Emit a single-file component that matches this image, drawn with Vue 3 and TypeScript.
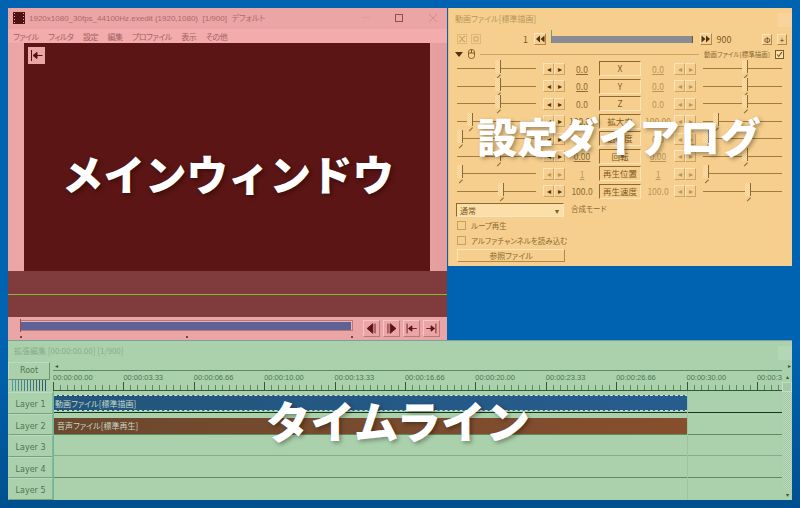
<script setup lang="ts">
interface ParamRow {
  label: string;
  left: string;
  right: string;
  leftPos: number;
  rightPos: number;
  leftLine?: boolean;
  rightLine?: boolean;
  leftOff?: boolean;
  rightOff?: boolean;
}

const menus = ["ファイル", "フィルタ", "設定", "編集", "プロファイル", "表示", "その他"];

const transport = [
  "M10 3L3.5 8.5L10 14Z M12.5 3V14",
  "M4.5 3V14 M7 3L13.5 8.5L7 14Z",
  "M3.5 3V14 M5 8.5L9 5.5V11.5Z M9 8.5H14.5",
  "M13.5 3V14 M12 8.5L8 5.5V11.5Z M8 8.5H2.5",
];

const params: ParamRow[] = [
  { label: "X", left: "0.0", right: "0.0", leftPos: 38, rightPos: 39, leftLine: true, rightLine: true, rightOff: true },
  { label: "Y", left: "0.0", right: "0.0", leftPos: 38, rightPos: 39, leftLine: true, rightLine: true, rightOff: true },
  { label: "Z", left: "0.0", right: "0.0", leftPos: 38, rightPos: 39, rightOff: true },
  { label: "拡大率", left: "100.00", right: "100.00", leftPos: 10, rightPos: 10, rightOff: true },
  { label: "透明度", left: "0.0", right: "0.0", leftPos: 0, rightPos: 0, rightOff: true },
  { label: "回転", left: "0.00", right: "0.00", leftPos: 38, rightPos: 39, leftLine: true, rightLine: true, rightOff: true },
  { label: "再生位置", left: "1", right: "1", leftPos: 0, rightPos: 0, leftLine: true, rightLine: true, leftOff: true, rightOff: true },
  { label: "再生速度", left: "100.0", right: "100.0", leftPos: 41, rightPos: 42, rightOff: true },
];

const rulerLabels = [
  "00:00:00.00", "00:00:03.33", "00:00:06.66", "00:00:10.00", "00:00:13.33", "00:00:16.66",
  "00:00:20.00", "00:00:23.33", "00:00:26.66", "00:00:30.00", "00:00:33.33",
];

const layers = ["Layer 1", "Layer 2", "Layer 3", "Layer 4", "Layer 5"];
</script>

<template>
  <div class="desktop">
    <section class="window main-window">
      <header class="main-title">
        <svg class="film" width="12" height="12" viewBox="0 0 12 12">
          <rect width="12" height="12" fill="#4e1212" />
          <path d="M1 1h1v1H1zM1 4h1v1H1zM1 7h1v1H1zM1 10h1v1H1zM10 1h1v1h-1zM10 4h1v1h-1zM10 7h1v1h-1zM10 10h1v1h-1z" fill="#eca5a5" />
        </svg>
        <span class="main-caption">1920x1080_30fps_44100Hz.exedit (1920,1080)&nbsp; [1/900]&nbsp; デフォルト</span>
        <div class="caption-buttons">
          <i class="cap-min"></i>
          <i class="cap-max"></i>
          <svg width="10" height="10" viewBox="0 0 10 10"><path d="M1 1L9 9M9 1L1 9" stroke="#cf8e8e" fill="none" /></svg>
        </div>
      </header>
      <nav class="menu">
        <span v-for="m in menus" :key="m">{{ m }}</span>
      </nav>
      <div class="stage">
        <div class="screen">
          <button class="back-btn">
            <svg width="17" height="17" viewBox="0 0 17 17">
              <path d="M3.5 3V14 M5 8.5L9 5.5V11.5Z M9 8.5H14.5" fill="#4e1212" stroke="#4e1212" />
            </svg>
          </button>
        </div>
      </div>
      <div class="wave"><i></i></div>
      <div class="seek">
        <div class="seek-track">
          <div class="seek-bar"><i class="seek-handle"></i><i class="seek-fill"></i></div>
          <div class="seek-marks"><i></i><i></i><i></i></div>
        </div>
        <div class="transport">
          <button v-for="d in transport" :key="d">
            <svg width="15" height="15" viewBox="0 0 17 17">
              <path :d="d" fill="#5a1514" stroke="#5a1514" />
            </svg>
          </button>
        </div>
      </div>
    </section>

    <section class="window settings-window">
      <header class="settings-title">
        <span>動画ファイル[標準描画]</span>
        <i class="ghost-btn"></i>
      </header>
      <div class="settings-tools">
        <button class="flat-btn">
          <svg width="8" height="8" viewBox="0 0 8 8"><path d="M1 1L4 3.5L7 1M1 7L4 4.5L7 7M4 3.5V4.5" fill="none" stroke="#b89558" /></svg>
        </button>
        <button class="flat-btn">
          <svg width="8" height="8" viewBox="0 0 8 8"><rect x="2" y="2" width="4" height="4" fill="none" stroke="#c9a666" /></svg>
        </button>
        <span class="frame-start">1</span>
        <button class="jump-btn">
          <svg width="10" height="10" viewBox="0 0 10 10"><path d="M5 1.5V8.5L1 5ZM9.5 1.5V8.5L5.5 5Z" fill="#4e3510" /></svg>
        </button>
        <div class="frame-bar"></div>
        <button class="jump-btn">
          <svg width="10" height="10" viewBox="0 0 10 10"><path d="M.5 1.5V8.5L4.5 5ZM5 1.5V8.5L9 5Z" fill="#4e3510" /></svg>
        </button>
        <span class="frame-end">900</span>
        <button class="mini-btn first">Φ</button>
        <button class="mini-btn">+</button>
      </div>
      <div class="settings-head">
        <span class="fold"></span>
        <svg width="7" height="10" viewBox="0 0 7 10">
          <path d="M3.5 .5C1.5 .5 .5 1.5 .5 3.5V6.5C.5 8.5 1.5 9.5 3.5 9.5S6.5 8.5 6.5 6.5V3.5C6.5 1.5 5.5 .5 3.5 .5ZM.5 4H6.5M3.5 .5V4" fill="none" stroke="#7c5a22" />
        </svg>
        <i class="head-rule"></i>
        <span class="head-label">動画ファイル[標準描画]</span>
        <span class="check checked">
          <svg width="9" height="9" viewBox="0 0 9 9"><path d="M1.5 4.5L3.5 7L7.5 1.5" fill="none" stroke="#6e4f1c" stroke-width="1.3" /></svg>
        </span>
      </div>
      <div class="params">
        <div v-for="p in params" :key="p.label" class="param">
          <div class="slider" :class="{ dim: p.leftOff }"><i :style="{ left: p.leftPos + 'px' }"></i></div>
          <div class="arrows" :class="{ dim: p.leftOff }"><b>◂</b><b>▸</b></div>
          <span class="value" :class="{ line: p.leftLine, dim: p.leftOff }">{{ p.left }}</span>
          <button class="param-btn">{{ p.label }}</button>
          <span class="value" :class="{ line: p.rightLine, dim: p.rightOff }">{{ p.right }}</span>
          <div class="arrows" :class="{ dim: p.rightOff }"><b>◂</b><b>▸</b></div>
          <div class="slider"><i :style="{ left: p.rightPos + 'px' }"></i></div>
        </div>
      </div>
      <div class="blend">
        <div class="select"><span>通常</span><b>▾</b></div>
        <span>合成モード</span>
      </div>
      <label class="option"><i class="check"></i>ループ再生</label>
      <label class="option"><i class="check"></i>アルファチャンネルを読み込む</label>
      <button class="ref-btn">参照ファイル</button>
    </section>

    <section class="window timeline-window">
      <header class="timeline-title">
        <span>拡張編集 [00:00:00.00] [1/900]</span>
        <i class="ghost-btn"></i>
      </header>
      <div class="timeline-body">
        <aside class="layer-col">
          <div class="root-btn">Root</div>
          <div class="zoom-strip"></div>
          <div v-for="l in layers" :key="l" class="layer-head">{{ l }}</div>
        </aside>
        <div class="track-col">
          <div class="hscroll"><b>◂</b><b class="end">▸</b></div>
          <div class="ruler">
            <div v-for="t in rulerLabels" :key="t" class="ruler-cell"><span>{{ t }}</span></div>
          </div>
          <div class="tracks">
            <div class="track dark-line"><div class="clip video">動画ファイル[標準描画]</div></div>
            <div class="track"><div class="clip audio">音声ファイル[標準再生]</div></div>
            <div class="track faint-line"></div>
            <div class="track"></div>
            <div class="track no-line"></div>
            <i class="end-line"></i>
          </div>
        </div>
        <div class="vscroll">
          <b>▴</b>
          <i class="thumb"></i>
          <i class="hatch"></i>
          <b>▾</b>
        </div>
      </div>
    </section>

    <div class="overlay ov-main">メインウィンドウ</div>
    <div class="overlay ov-settings">設定ダイアログ</div>
    <div class="overlay ov-timeline">タイムライン</div>
  </div>
</template>

<style>
html,
body {
  margin: 0;
  overflow: hidden;
}
</style>

<style scoped>
.desktop {
  position: relative;
  width: 800px;
  height: 508px;
  overflow: hidden;
  background: linear-gradient(#0063b1 0, #0063b1 340px, #00508f 508px);
  font-family: "Noto Sans CJK JP", "Noto Sans", sans-serif;
  font-size: 9px;
  font-feature-settings: "palt";
}

button {
  padding: 0;
  font: inherit;
  color: inherit;
}

.window {
  position: absolute;
  box-sizing: border-box;
}

/* main window */
.main-window {
  left: 8px;
  top: 8px;
  width: 439px;
  height: 332px;
  background: #eca5a5;
  color: #a86a6a;
  border-bottom: 1px solid #4a7ca4;
}

.main-title {
  display: flex;
  align-items: center;
  height: 21px;
  padding: 0 0 2px 5px;
  box-sizing: border-box;
}

.film {
  flex: none;
}

.main-caption {
  margin-left: 4px;
  font-family: "Liberation Sans", "Noto Sans CJK JP", sans-serif;
  font-size: 8px;
  white-space: nowrap;
  color: #a96b6b;
}

.caption-buttons {
  display: flex;
  align-items: center;
  margin-left: auto;
  margin-right: 9px;
  gap: 25px;
}

.cap-min {
  width: 8px;
  height: 1px;
  background: #e29c9c;
}

.cap-max {
  width: 6px;
  height: 6px;
  border: 1px solid #8a5050;
}

.menu {
  display: flex;
  align-items: center;
  gap: 9.5px;
  height: 14px;
  padding-left: 5px;
  background: #f3abab;
  font-size: 8px;
  letter-spacing: -0.5px;
  color: #a06464;
}

.stage {
  height: 228px;
  padding: 0 17px 0 16px;
  background: linear-gradient(90deg, #eca5a5, #f0a9a9 85%, #e49d9d);
}

.screen {
  height: 100%;
  padding: 4px;
  box-sizing: border-box;
  background: #5a1514;
}

.back-btn {
  display: block;
  width: 17px;
  height: 17px;
  border: none;
  background: #eca5a5;
}

.back-btn svg {
  display: block;
}

.wave {
  display: flex;
  align-items: center;
  height: 46px;
  background: #803c3c;
}

.wave i {
  flex: 1;
  height: 1px;
  background: #86b83a;
}

.seek {
  display: flex;
  height: 22px;
  padding: 3px 6px 0 12px;
  background: #eca5a5;
}

.seek-track {
  width: 333px;
}

.seek-bar {
  display: flex;
  align-items: center;
  height: 11px;
  box-sizing: border-box;
  border: 1px solid #b87878;
  border-left: none;
  background: #efb0b0;
}

.seek-handle {
  width: 1px;
  height: 13px;
  background: #8a5050;
}

.seek-fill {
  width: 330px;
  height: 8px;
  background: #5e6297;
}

.seek-marks {
  display: flex;
  justify-content: space-between;
  padding: 5px 0 0;
}

.seek-marks i {
  width: 2px;
  height: 2px;
  background: #7a4040;
}

.transport {
  display: flex;
  gap: 3px;
  margin-left: 10px;
}

.transport button {
  width: 17px;
  height: 17px;
  background: #eca5a5;
  border: 1px solid;
  border-color: #f6c6c6 #b87878 #b87878 #f6c6c6;
}

.transport svg {
  display: block;
}

/* settings dialog */
.settings-window {
  left: 448px;
  top: 8px;
  width: 344px;
  height: 258px;
  background: #f6cf8f;
  color: #8a6a30;
  border-left: 1px solid #e8b98a;
}

.settings-title {
  position: relative;
  height: 23px;
  padding: 5px 0 0 6px;
  box-sizing: border-box;
  color: #b89558;
  font-size: 8px;
}

.ghost-btn {
  position: absolute;
  right: 0;
  top: 5px;
  width: 14px;
  height: 14px;
  background: rgba(255, 255, 255, 0.12);
}

.settings-tools {
  display: flex;
  align-items: center;
  height: 16px;
  padding-left: 8px;
}

.flat-btn {
  width: 10px;
  height: 10px;
  margin-right: 4px;
  border: 1px solid #dcb97a;
  background: none;
}

.flat-btn svg {
  display: block;
}

.frame-start {
  margin-left: 38px;
  width: 11px;
  color: #7c5a22;
}

.jump-btn {
  width: 12px;
  height: 12px;
  border: 1px solid;
  border-color: #fbe5bd #b0894a #b0894a #fbe5bd;
  background: none;
}

.jump-btn svg {
  display: block;
}

.frame-bar {
  position: relative;
  width: 144px;
  height: 7px;
  margin: 0 7px 0 5px;
  border-left: 1px solid #6e8f7a;
  border-right: 1px solid #6e5a30;
  background: #8a8a94;
}

.frame-bar::before {
  content: "";
  position: absolute;
  left: -1px;
  top: -6px;
  width: 1px;
  height: 6px;
  background: #6a9f8a;
}

.frame-end {
  margin-left: 4px;
  width: 47px;
  color: #7c5a22;
}

.mini-btn {
  width: 10px;
  height: 11px;
  margin-right: 5px;
  border: 1px solid;
  border-color: #fbe5bd #b0894a #b0894a #fbe5bd;
  background: none;
  font-size: 8px;
  line-height: 9px;
  color: #4e3510;
}

.settings-head {
  display: flex;
  align-items: center;
  gap: 5px;
  height: 14px;
  padding: 0 8px 0 6px;
}

.fold {
  width: 0;
  height: 0;
  border: solid transparent;
  border-width: 5px 4px 0;
  border-top-color: #4e3510;
}

.head-rule {
  flex: 1;
  height: 1px;
  background: #c9a666;
}

.head-label {
  font-size: 6.5px;
  color: #8a6a30;
}

.check {
  display: inline-flex;
  align-items: center;
  justify-content: center;
  width: 7px;
  height: 7px;
  border: 1px solid #c2a263;
  box-sizing: content-box;
}

.check.checked {
  border-color: #7c5a22;
  background: #fadfa9;
}

.params {
  margin-top: -1px;
}

.param {
  display: flex;
  align-items: center;
  height: 17.5px;
  padding-left: 8px;
}

.slider {
  position: relative;
  width: 79px;
  height: 1px;
  background: #a17c3c;
}

.slider i {
  position: absolute;
  top: -8px;
  width: 6px;
  height: 13px;
  border-right: 1px solid #8a6a30;
  box-sizing: border-box;
  background: repeating-conic-gradient(#fbe0b0 0 25%, #f6cf8f 0 50%) 0 0 / 2px 2px;
}

.slider i::after {
  content: "";
  position: absolute;
  right: -1px;
  bottom: -2px;
  width: 5px;
  height: 1px;
  background: #8a6a30;
  transform: rotate(-45deg);
  transform-origin: right bottom;
}

.arrows {
  display: flex;
  margin-left: 7px;
}

.arrows b {
  width: 9px;
  height: 10px;
  border: 1px solid;
  border-color: #fbe5bd #c9a666 #c9a666 #fbe5bd;
  font-size: 8px;
  font-weight: 400;
  line-height: 10px;
  text-align: center;
  color: #4e3510;
  overflow: hidden;
}

.arrows.dim b {
  color: #b89558;
}

.value {
  width: 34px;
  text-align: center;
  font-size: 8.5px;
  color: #8a6a30;
}

.value.dim {
  color: #b89558;
}

.value.line {
  text-decoration: underline;
}

.param-btn {
  width: 42px;
  height: 15px;
  border: 1px solid;
  border-color: #8a6a30 #fbe5bd #fbe5bd #8a6a30;
  background: none;
  font-size: 8.5px;
  line-height: 13px;
  color: #7c5a22;
  white-space: nowrap;
  overflow: hidden;
}

.param .value + .arrows {
  margin-left: -1px;
}

.param .arrows + .slider {
  margin-left: 7px;
}

.blend {
  display: flex;
  gap: 7px;
  padding: 3px 0 0 7px;
  font-size: 7.5px;
}

.select {
  display: flex;
  align-items: center;
  justify-content: space-between;
  width: 108px;
  height: 14px;
  padding: 0 4px 0 3px;
  box-sizing: border-box;
  border: 1px solid;
  border-color: #8a6a30 #fbe5bd #fbe5bd #8a6a30;
  background: #fadfa9;
  color: #7c5a22;
  font-size: 8px;
}

.select b {
  font-size: 8px;
  font-weight: 400;
}

.option {
  display: flex;
  align-items: center;
  gap: 5px;
  height: 14px;
  margin-top: 1px;
  padding-left: 8px;
  font-size: 7.5px;
}

.ref-btn {
  display: block;
  width: 108px;
  height: 13px;
  margin: 2px 0 0 8px;
  border: 1px solid;
  border-color: #fbe5bd #b0894a #b0894a #fbe5bd;
  background: none;
  font-size: 8px;
  line-height: 11px;
  color: #8a6a30;
}

/* timeline */
.timeline-window {
  left: 8px;
  top: 340px;
  width: 784px;
  height: 160px;
  background: #abd1ac;
  color: #4f7552;
  border-top: 1px solid #7aa0a0;
}

.timeline-title {
  position: relative;
  height: 21px;
  padding: 4px 0 0 6px;
  box-sizing: border-box;
  color: #88ac8a;
  font-size: 8px;
}

.timeline-body {
  display: flex;
  height: 138px;
}

.layer-col {
  width: 44px;
  flex: none;
}

.root-btn {
  height: 18px;
  margin-right: 2px;
  border: 1px solid;
  border-color: #bcdabd #6e946f #6e946f #bcdabd;
  box-sizing: border-box;
  font-family: "DejaVu Sans", sans-serif;
  font-size: 8px;
  line-height: 15px;
  text-align: center;
}

.zoom-strip {
  height: 11px;
  margin: 0 4px 1px 4px;
  background:
    repeating-linear-gradient(90deg, transparent 0 1.5px, #abd1ac 1.5px 3px),
    linear-gradient(90deg, #4f9aa8, #2f4f6a);
}

.layer-head {
  height: 21.6px;
  margin-right: -1px;
  border: 1px solid;
  border-color: #bcdabd #8fb490 #7a9f7c transparent;
  box-sizing: border-box;
  font-family: "DejaVu Sans", sans-serif;
  font-size: 8px;
  line-height: 23px;
  text-align: center;
}

.track-col {
  width: 729px;
  margin-left: 1px;
  flex: none;
}

.hscroll {
  display: flex;
  justify-content: space-between;
  height: 8px;
  padding: 0 0 0 2px;
  font-size: 6px;
  line-height: 8px;
  color: #2f5a35;
}

.hscroll .end {
  margin-right: -9px;
}

.hscroll b {
  font-weight: 400;
}

.ruler {
  display: flex;
  height: 21px;
  box-sizing: border-box;
  border-top: 1px solid #5f8a62;
  border-bottom: 1px solid #2f5a35;
  background:
    repeating-linear-gradient(90deg, #5a8a5e 0 1px, transparent 1px 7.04px) 0 100% / 100% 5px no-repeat;
  overflow: hidden;
}

.ruler-cell {
  position: relative;
  flex: none;
  width: 70.4px;
  font-family: "Liberation Sans", sans-serif;
  font-size: 7.5px;
  line-height: 12px;
  white-space: nowrap;
}

.ruler-cell::before {
  content: "";
  position: absolute;
  left: 0;
  bottom: 0;
  width: 1px;
  height: 8px;
  background: #2f5a35;
}

.ruler-cell span {
  display: block;
  padding-top: 1px;
}

.tracks {
  position: relative;
  border-left: 1px solid #62b8a0;
}

.track {
  height: 21.8px;
  box-sizing: border-box;
  padding-top: 4px;
  border-bottom: 1px solid #5f8a62;
}

.dark-line {
  border-bottom-color: #14381c;
}

.faint-line {
  border-bottom-color: #87aa88;
}

.no-line {
  border-bottom: none;
}

.clip {
  width: 634px;
  height: 16px;
  box-sizing: border-box;
  font-size: 8px;
  line-height: 15px;
  color: #c7d8c7;
}

.clip.video {
  padding-left: 1px;
  border: 1px dashed #cfe2cf;
  border-left: none;
  background: linear-gradient(90deg, #22557a, #275c8f);
}

.clip.audio {
  margin-top: 1px;
  padding-left: 3px;
  background: linear-gradient(90deg, #6b482e, #864f2e);
}

.end-line {
  position: absolute;
  left: 633px;
  top: 0;
  bottom: 0;
  width: 1px;
  background: #9dc4a0;
}

.vscroll {
  display: flex;
  flex-direction: column;
  width: 10px;
  margin-top: 10px;
  font-size: 6px;
  line-height: 10px;
  text-align: center;
  color: #2f5a35;
}

.vscroll b {
  font-weight: 400;
  height: 10px;
}

.thumb {
  height: 10px;
  background: #a5c9a6;
  border: 1px solid #c4dec5;
  box-sizing: border-box;
}

.hatch {
  flex: 1;
  background: repeating-conic-gradient(#bcd9bd 0 25%, #a2c8a4 0 50%) 0 0 / 2px 2px;
}

/* captions over the screenshot */
.overlay {
  position: absolute;
  color: #fff;
  font-family: "Noto Sans CJK JP", sans-serif;
  font-weight: 900;
  font-feature-settings: normal;
  line-height: 1;
  white-space: nowrap;
  text-shadow: 2px 2px 4px rgba(0, 0, 0, 0.35);
}

.ov-main {
  left: 62px;
  top: 153px;
  font-size: 41.5px;
}

.ov-settings {
  left: 477px;
  top: 116px;
  font-size: 40.5px;
}

.ov-timeline {
  left: 266px;
  top: 398px;
  font-size: 44.5px;
}
</style>
